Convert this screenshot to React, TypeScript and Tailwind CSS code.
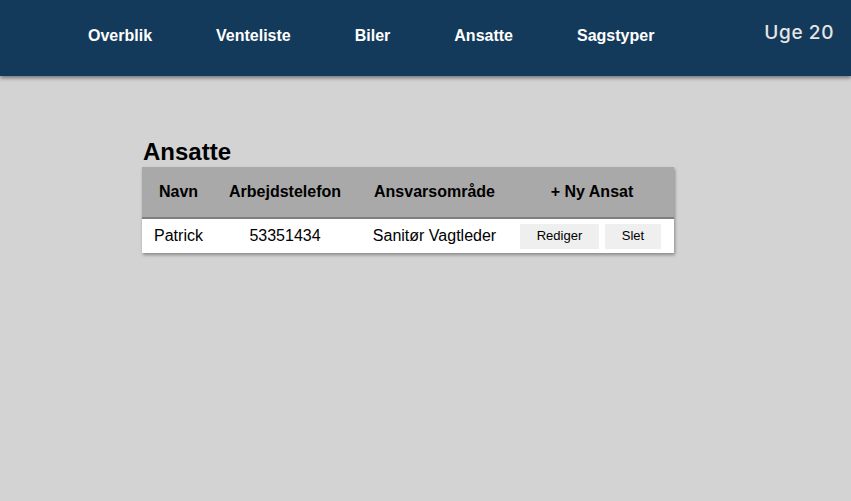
const navItems = ['Overblik', 'Venteliste', 'Biler', 'Ansatte', 'Sagstyper'];

const employees = [{ id: 1, name: 'Patrick', phone: '53351434', area: 'Sanitør Vagtleder' }];

export default function App() {
  return (
    <div className="min-h-[501px] bg-[#d3d3d3] font-['Liberation_Sans',Arial,sans-serif]">
      <header className="flex h-[76px] items-center bg-[#143a5b] pl-[56px] pr-[17px] shadow-[0_2px_4px_rgba(0,0,0,0.45)]">
        <nav className="-mt-[5px] flex flex-1">
          {navItems.map((item) => (
            <a key={item} className="px-[32px] text-[16px] font-bold text-white">
              {item}
            </a>
          ))}
        </nav>
        <div className="-mt-[10px] font-['Inter',sans-serif] text-[19px] font-medium tracking-[0.6px] text-[#e6e6e6]">
          Uge 20
        </div>
      </header>

      <main className="ml-[142px] w-[532px] pt-[61px]">
        <h1 className="pl-[1px] text-[24px] font-bold leading-[30px] text-black">Ansatte</h1>
        <table className="w-full border-collapse bg-white shadow-[1px_2px_3px_rgba(0,0,0,0.35)]">
          <thead>
            <tr className="h-[51px] bg-[#a9a9a9] text-[16px] font-bold text-black">
              <th className="w-[73px] text-center">Navn</th>
              <th className="w-[140px] text-center">Arbejdstelefon</th>
              <th className="w-[159px] text-center">Ansvarsområde</th>
              <th className="pr-[4px] text-center">+ Ny Ansat</th>
            </tr>
          </thead>
          <tbody>
            {employees.map((e) => (
              <tr key={e.id} className="h-[35px] border-t-2 border-[#7f7f7f] text-[16px] text-black">
                <td className="text-center">{e.name}</td>
                <td className="text-center">{e.phone}</td>
                <td className="text-center">{e.area}</td>
                <td>
                  <div className="flex gap-[6px] pl-[6px]">
                    <button className="h-[25px] w-[79px] bg-[#efefef] text-[13px]">Rediger</button>
                    <button className="h-[25px] w-[56px] bg-[#efefef] text-[13px]">Slet</button>
                  </div>
                </td>
              </tr>
            ))}
          </tbody>
        </table>
      </main>
    </div>
  );
}
